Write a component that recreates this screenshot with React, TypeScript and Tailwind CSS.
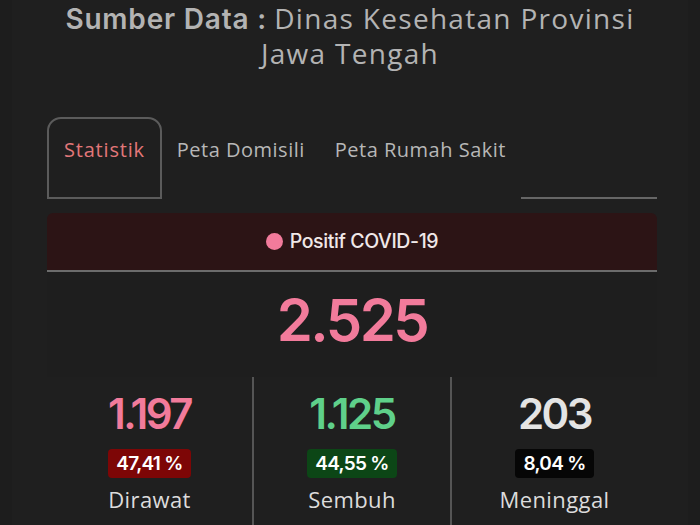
import React from 'react';

const stats = [
  { value: '1.197', pct: '47,41 %', label: 'Dirawat', color: 'text-[#f27b9b]', badge: 'bg-[#7d0606]' },
  { value: '1.125', pct: '44,55 %', label: 'Sembuh', color: 'text-[#5fd08a]', badge: 'bg-[#0c4616]' },
  { value: '203', pct: '8,04 %', label: 'Meninggal', color: 'text-[#e4e4e4]', badge: 'bg-[#060606]' },
];

export default function App() {
  return (
    <div className="h-[525px] w-[700px] overflow-hidden bg-[#1d1d1d] font-['Open_Sans',sans-serif]">
      <div className="mx-[12px] h-full bg-[#1f1f1f]">
        {/* source line */}
        <div className="pt-[1px] text-center text-[28px] leading-[34px] text-[#b3b3b3]">
          <span className="font-['Inter',sans-serif] font-semibold tracking-[0.8px]">Sumber Data :</span>{' '}
          <span className="tracking-[1.3px]">Dinas Kesehatan Provinsi</span>
          <br />
          <span className="tracking-[1.3px]">Jawa Tengah</span>
        </div>

        <div className="ml-[35px] mt-[47px] w-[610px]">
          {/* tabs */}
          <div className="flex h-[82px] items-stretch text-[20px] tracking-[0.5px]">
            <div className="rounded-t-[14px] border-2 border-[#5b5b5b] px-[15px] pt-[16px] tracking-[0.8px] text-[#e27779]">Statistik</div>
            <div className="px-[15px] pt-[18px] text-[#b7b7b7]">Peta Domisili</div>
            <div className="px-[15px] pt-[18px] text-[#b7b7b7]">Peta Rumah Sakit</div>
            <div className="flex-1 border-b-2 border-[#666]"></div>
          </div>

          {/* header */}
          <div className="mt-[14px] flex h-[59px] items-center justify-center gap-[7px] rounded-t-[6px] border-b-2 border-[#6c6c6c] bg-[#2c1415]">
            <span className="h-[17px] w-[17px] rounded-full bg-[#f27b9b]"></span>
            <span className="font-['Inter',sans-serif] text-[19.5px] font-medium tracking-[-0.4px] text-[#f0e8e8]">Positif COVID-19</span>
          </div>

          {/* total */}
          <div className="flex h-[105px] items-center justify-center bg-[#1e1e1e] pb-[8px] font-['Inter',sans-serif] text-[58px] font-semibold tracking-[-2.5px] text-[#f27b9b]">
            2.525
          </div>

          {/* breakdown */}
          <div className="grid grid-cols-[205px_198px_207px]">
            {stats.map((s, i) => (
              <div
                key={s.label}
                className={`flex h-[150px] flex-col items-center pt-[12px] ${i > 0 ? 'border-l-2 border-[#555]' : ''}`}
              >
                <div className={`font-['Inter',sans-serif] text-[42px] font-semibold leading-[50px] tracking-[-2.5px] ${s.color}`}>
                  {s.value}
                </div>
                <div
                  className={`mt-[10px] rounded-[4px] px-[8px] font-['Inter',sans-serif] text-[19px] font-semibold leading-[29px] tracking-[-0.7px] text-white ${s.badge}`}
                >
                  {s.pct}
                </div>
                <div className="mt-[6px] text-[22px] leading-[30px] tracking-[0.4px] text-[#dcdcdc]">{s.label}</div>
              </div>
            ))}
          </div>
        </div>
      </div>
    </div>
  );
}
